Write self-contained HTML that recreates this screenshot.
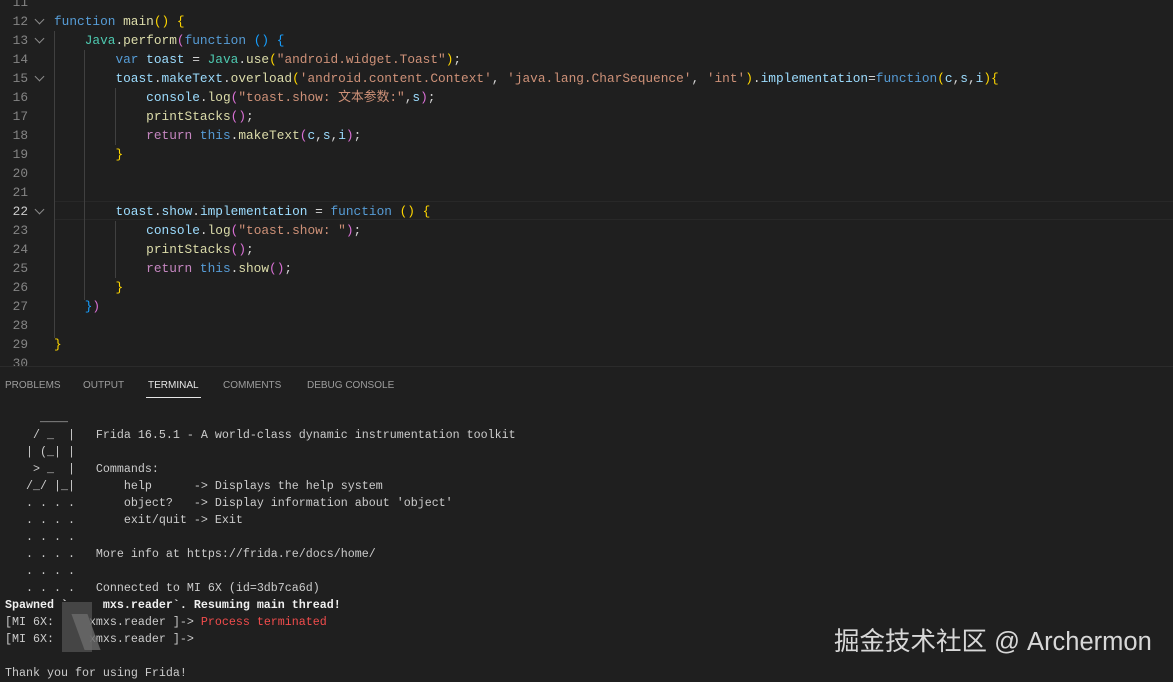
<!DOCTYPE html>
<html><head><meta charset="utf-8">
<style>
html,body{margin:0;padding:0;width:1173px;height:674px;overflow:hidden;background:#1f1f1f;}
.ed{position:absolute;left:0;top:0;width:1173px;height:366px;background:#1f1f1f;}
.ln{position:absolute;left:0;width:28px;text-align:right;color:#858585;font:12.8px/19px "Liberation Mono",monospace;}
.ln.cur{color:#cccccc;}
.cl{position:absolute;left:54px;white-space:pre;color:#d4d4d4;font:12.8px/19px "Liberation Mono","Noto Sans CJK SC",monospace;}
.chev{position:absolute;left:36px;width:6px;height:6px;border-right:1.3px solid #8a8a8a;border-bottom:1.3px solid #8a8a8a;transform:rotate(45deg);}
.g{position:absolute;width:1px;background:#404040;}
.k{color:#569cd6}.r{color:#c586c0}.v{color:#9cdcfe}.f{color:#dcdcaa}.s{color:#ce9178}.t{color:#4ec9b0}
.y{color:#ffd700}.p{color:#da70d6}.b{color:#179fff}
.panel{position:absolute;left:0;top:366px;width:1173px;height:308px;border-top:1px solid #2b2b2b;background:#1f1f1f;}
.tab{position:absolute;top:13px;font:10px "Liberation Sans",sans-serif;color:#9d9d9d;}
.term{position:absolute;left:5px;white-space:pre;color:#cccccc;font:11.67px/17px "Liberation Mono",monospace;}
.wm{position:absolute;left:834px;top:621px;font:25.5px "Liberation Sans","Noto Sans CJK SC",sans-serif;color:#d8d8d8;white-space:pre;}
</style></head><body>
<div class="ed">
<div style="position:absolute;left:54px;top:201px;width:1119px;height:19px;border-top:1px solid #282828;border-bottom:1px solid #282828;box-sizing:border-box;"></div>
<div class="g" style="left:54px;top:31px;height:307px"></div>
<div class="g" style="left:84px;top:50px;height:250px"></div>
<div class="g" style="left:115px;top:88px;height:57px"></div>
<div class="g" style="left:115px;top:221px;height:57px"></div>

<div class="ln" style="top:-7px">11</div>
<div class="ln" style="top:12px">12</div>
<div class="ln" style="top:31px">13</div>
<div class="ln" style="top:50px">14</div>
<div class="ln" style="top:69px">15</div>
<div class="ln" style="top:88px">16</div>
<div class="ln" style="top:107px">17</div>
<div class="ln" style="top:126px">18</div>
<div class="ln" style="top:145px">19</div>
<div class="ln" style="top:164px">20</div>
<div class="ln" style="top:183px">21</div>
<div class="ln cur" style="top:202px">22</div>
<div class="ln" style="top:221px">23</div>
<div class="ln" style="top:240px">24</div>
<div class="ln" style="top:259px">25</div>
<div class="ln" style="top:278px">26</div>
<div class="ln" style="top:297px">27</div>
<div class="ln" style="top:316px">28</div>
<div class="ln" style="top:335px">29</div>
<div class="ln" style="top:354px">30</div>

<div class="chev" style="top:16px"></div>
<div class="chev" style="top:35px"></div>
<div class="chev" style="top:73px"></div>
<div class="chev" style="top:206px"></div>

<div class="cl" style="top:12px"><span class="k">function</span> <span class="f">main</span><span class="y">()</span> <span class="y">{</span></div>
<div class="cl" style="top:31px">    <span class="t">Java</span>.<span class="f">perform</span><span class="p">(</span><span class="k">function</span> <span class="b">()</span> <span class="b">{</span></div>
<div class="cl" style="top:50px">        <span class="k">var</span> <span class="v">toast</span> = <span class="t">Java</span>.<span class="f">use</span><span class="y">(</span><span class="s">"android.widget.Toast"</span><span class="y">)</span>;</div>
<div class="cl" style="top:69px">        <span class="v">toast</span>.<span class="v">makeText</span>.<span class="f">overload</span><span class="y">(</span><span class="s">'android.content.Context'</span>, <span class="s">'java.lang.CharSequence'</span>, <span class="s">'int'</span><span class="y">)</span>.<span class="v">implementation</span>=<span class="k">function</span><span class="y">(</span><span class="v">c</span>,<span class="v">s</span>,<span class="v">i</span><span class="y">){</span></div>
<div class="cl" style="top:88px">            <span class="v">console</span>.<span class="f">log</span><span class="p">(</span><span class="s">"toast.show: 文本参数:"</span>,<span class="v">s</span><span class="p">)</span>;</div>
<div class="cl" style="top:107px">            <span class="f">printStacks</span><span class="p">()</span>;</div>
<div class="cl" style="top:126px">            <span class="r">return</span> <span class="k">this</span>.<span class="f">makeText</span><span class="p">(</span><span class="v">c</span>,<span class="v">s</span>,<span class="v">i</span><span class="p">)</span>;</div>
<div class="cl" style="top:145px">        <span class="y">}</span></div>
<div class="cl" style="top:202px">        <span class="v">toast</span>.<span class="v">show</span>.<span class="v">implementation</span> = <span class="k">function</span> <span class="y">()</span> <span class="y">{</span></div>
<div class="cl" style="top:221px">            <span class="v">console</span>.<span class="f">log</span><span class="p">(</span><span class="s">"toast.show: "</span><span class="p">)</span>;</div>
<div class="cl" style="top:240px">            <span class="f">printStacks</span><span class="p">()</span>;</div>
<div class="cl" style="top:259px">            <span class="r">return</span> <span class="k">this</span>.<span class="f">show</span><span class="p">()</span>;</div>
<div class="cl" style="top:278px">        <span class="y">}</span></div>
<div class="cl" style="top:297px">    <span class="b">}</span><span class="p">)</span></div>
<div class="cl" style="top:335px"><span class="y">}</span></div>
</div>

<div class="panel">
<div class="tab" style="left:5px">PROBLEMS</div>
<div class="tab" style="left:83px">OUTPUT</div>
<div class="tab" style="left:148px;color:#e7e7e7">TERMINAL</div>
<div style="position:absolute;left:146px;top:30px;width:55px;height:1px;background:#e7e7e7"></div>
<div class="tab" style="left:223px">COMMENTS</div>
<div class="tab" style="left:307px">DEBUG CONSOLE</div>
</div>

<div class="term" style="top:410px">     ____
    / _  |   Frida 16.5.1 - A world-class dynamic instrumentation toolkit
   | (_| |
    &gt; _  |   Commands:
   /_/ |_|       help      -&gt; Displays the help system
   . . . .       object?   -&gt; Display information about 'object'
   . . . .       exit/quit -&gt; Exit
   . . . .
   . . . .   More info at https://frida.re/docs/home/
   . . . .
   . . . .   Connected to MI 6X (id=3db7ca6d)
<b style="color:#f0f0f0">Spawned `     mxs.reader`. Resuming main thread!</b>
[MI 6X:     xmxs.reader ]-&gt; <span style="color:#f14c4c">Process terminated</span>
[MI 6X:     xmxs.reader ]-&gt;

Thank you for using Frida!</div>
<div style="position:absolute;left:62px;top:602px;width:30px;height:50px;background:#555;opacity:.7"></div>
<div style="position:absolute;left:78px;top:614px;width:16px;height:36px;background:#6a6a6a;transform:skewX(20deg);opacity:.8"></div>

<div class="wm">掘金技术社区 @ Archermon</div>
</body></html>
